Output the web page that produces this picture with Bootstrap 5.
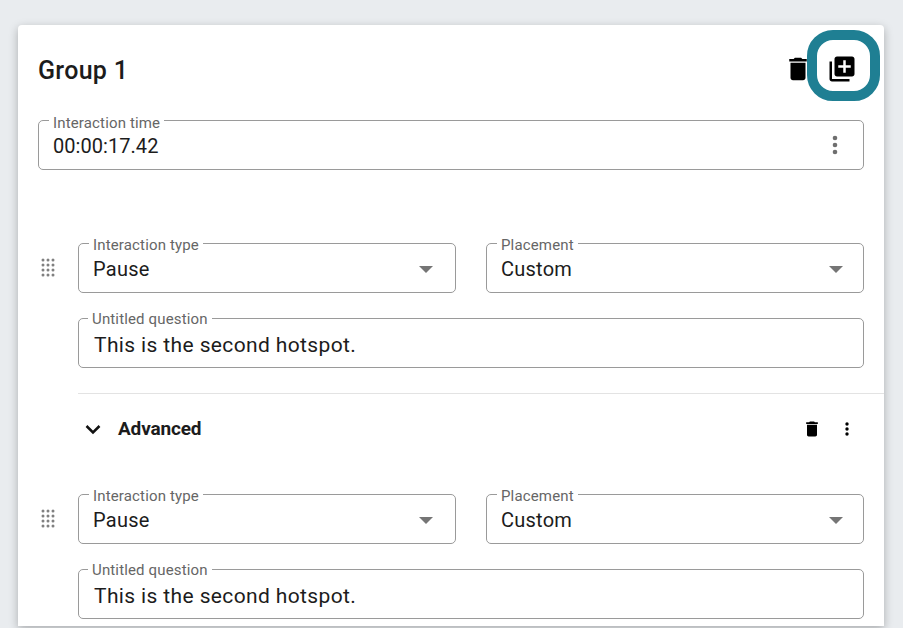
<!DOCTYPE html>
<html>
<head>
    <title>Group 1</title>
    <link href="https://cdn.jsdelivr.net/npm/bootstrap@5.3.3/dist/css/bootstrap.min.css" rel="stylesheet">
    <style>
        html, body {
            height: 628px;
            overflow: hidden;
        }

        body {
            background-color: #e9ecef;
            font-family: Roboto, "Liberation Sans", sans-serif;
            color: #1c1c1c;
        }

        .page-wrap {
            padding: 25px 19px 0 18px;
        }

        .group-panel {
            position: relative;
            height: 601px;
            background-color: #fff;
            border-radius: 4px 4px 0 0;
            box-shadow: 0 3px 10px rgba(0, 0, 0, .27);
        }

        .group-head {
            height: 95px;
            padding: 0 20px 8px 20px;
        }

        .group-title {
            font-size: 25px;
            font-weight: 500;
            letter-spacing: .3px;
            line-height: 1;
            margin: 4px 0 0;
        }

        .icon-slot {
            display: flex;
            align-items: center;
            justify-content: center;
            width: 44px;
            height: 46px;
        }

        .highlight-ring {
            position: absolute;
            left: 789px;
            top: 5px;
            width: 73px;
            height: 71px;
            border: 10px solid #1f7f93;
            border-radius: 26px;
        }

        .outline-field {
            position: relative;
            height: 50px;
            border: 1px solid #9a9a9a;
            border-radius: 5px;
            padding: 0 14px;
            font-size: 20px;
            letter-spacing: .25px;
        }

        .field-label {
            position: absolute;
            top: -7px;
            left: 10px;
            padding: 0 4px;
            background-color: #fff;
            font-size: 15px;
            line-height: 17px;
            letter-spacing: .15px;
            color: #666;
        }

        .time-label {
            top: -6px;
        }

        .question-label {
            top: -8px;
            left: 9px;
        }

        .field-value {
            padding-top: 11px;
            line-height: 29px;
        }

        .time-value {
            letter-spacing: .05px;
        }

        .question-value {
            font-size: 21px;
            letter-spacing: .37px;
            padding-top: 12px;
            padding-left: 1px;
        }

        .time-row {
            margin: 0 20px;
        }

        .time-dots {
            position: absolute;
            right: 21px;
            top: 13px;
        }

        .select-caret {
            position: absolute;
            right: 22px;
            top: 22px;
            width: 0;
            height: 0;
            border-left: 7px solid transparent;
            border-right: 7px solid transparent;
            border-top: 7px solid #757575;
        }

        .placement-caret {
            right: 20px;
        }

        .hotspot-block {
            padding: 0 20px 0 60px;
            position: relative;
        }

        .drag-handle {
            position: absolute;
            left: 23px;
            top: 15px;
        }

        .field-pair {
            display: grid;
            grid-template-columns: 378px 378px;
            column-gap: 30px;
            margin-bottom: 25px;
        }

        .advanced-row {
            height: 70px;
            margin: 25px 0 31px 60px;
            padding: 0 28px 0 5px;
            border-top: 1px solid #e3e3e3;
        }

        .advanced-label {
            font-size: 19px;
            font-weight: 700;
            margin-left: 15px;
            padding-top: 1px;
            letter-spacing: -.15px;
        }

        .advanced-dots {
            margin-left: 16px;
        }

        .first-block {
            margin-top: 73px;
        }
    </style>
</head>

<body>

<div class="page-wrap">
    <div class="group-panel">
        <!-- titulo do grupo -->
        <div class="group-head d-flex align-items-center justify-content-between">
            <h1 class="group-title">Group 1</h1>
            <div class="d-flex align-items-center">
                <div class="icon-slot">
                    <svg width="30" height="30" viewBox="0 0 24 24"><path d="M6 19c0 1.100.9 2 2 2h8c1.100 0 2-.9 2-2V7H6v12zM19 4h-3.500l-1-1h-5l-1 1H5v2h14V4z"/></svg>
                </div>
                <div class="icon-slot">
                    <svg width="30" height="30" viewBox="0 0 24 24"><path d="M4 6H2v14c0 1.100.9 2 2 2h14v-2H4V6zm16-4H8c-1.100 0-2 .9-2 2v12c0 1.100.9 2 2 2h12c1.100 0 2-.9 2-2V4c0-1.100-.9-2-2-2zm-1 9h-4v4h-2v-4H9V9h4V5h2v4h4v2z"/></svg>
                </div>
            </div>
        </div>
        <div class="highlight-ring"></div>

        <div class="time-row">
            <div class="outline-field">
                <span class="field-label time-label">Interaction time</span>
                <div class="field-value time-value">00:00:17.42</div>
                <svg class="time-dots" width="14" height="22" viewBox="0 0 14 22" fill="#6f6f6f"><circle cx="7" cy="4" r="2.300"/><circle cx="7" cy="11" r="2.300"/><circle cx="7" cy="18" r="2.300"/></svg>
            </div>
        </div>

        <!-- primeiro hotspot -->
        <div class="hotspot-block first-block">
            <svg class="drag-handle" width="16" height="19" viewBox="0 0 16 19" fill="#808080"><circle cx="2" cy="2" r="1.500"/><circle cx="7" cy="2" r="1.500"/><circle cx="12" cy="2" r="1.500"/><circle cx="2" cy="7" r="1.500"/><circle cx="7" cy="7" r="1.500"/><circle cx="12" cy="7" r="1.500"/><circle cx="2" cy="12" r="1.500"/><circle cx="7" cy="12" r="1.500"/><circle cx="12" cy="12" r="1.500"/><circle cx="2" cy="17" r="1.500"/><circle cx="7" cy="17" r="1.500"/><circle cx="12" cy="17" r="1.500"/></svg>
            <div class="field-pair">
                <div class="outline-field">
                    <span class="field-label">Interaction type</span>
                    <div class="field-value">Pause</div>
                    <span class="select-caret"></span>
                </div>
                <div class="outline-field">
                    <span class="field-label">Placement</span>
                    <div class="field-value">Custom</div>
                    <span class="select-caret placement-caret"></span>
                </div>
            </div>
            <div class="outline-field">
                <span class="field-label question-label">Untitled question</span>
                <div class="field-value question-value">This is the second hotspot.</div>
            </div>
        </div>

        <div class="advanced-row d-flex align-items-center justify-content-between">
            <div class="d-flex align-items-center">
                <svg width="20" height="20" viewBox="0 0 20 20" fill="none" stroke="#111" stroke-width="2.500"><path d="M3.500 7l6.500 6.500L16.500 7"/></svg>
                <span class="advanced-label">Advanced</span>
            </div>
            <div class="d-flex align-items-center">
                <svg width="20" height="20" viewBox="0 0 24 24"><path d="M6 19c0 1.100.9 2 2 2h8c1.100 0 2-.9 2-2V7H6v12zM19 4h-3.500l-1-1h-5l-1 1H5v2h14V4z"/></svg>
                <svg class="advanced-dots" width="18" height="18" viewBox="0 0 18 18"><circle cx="9" cy="4" r="1.700"/><circle cx="9" cy="9" r="1.700"/><circle cx="9" cy="14" r="1.700"/></svg>
            </div>
        </div>

        <!-- segundo hotspot -->
        <div class="hotspot-block">
            <svg class="drag-handle" width="16" height="19" viewBox="0 0 16 19" fill="#808080"><circle cx="2" cy="2" r="1.500"/><circle cx="7" cy="2" r="1.500"/><circle cx="12" cy="2" r="1.500"/><circle cx="2" cy="7" r="1.500"/><circle cx="7" cy="7" r="1.500"/><circle cx="12" cy="7" r="1.500"/><circle cx="2" cy="12" r="1.500"/><circle cx="7" cy="12" r="1.500"/><circle cx="12" cy="12" r="1.500"/><circle cx="2" cy="17" r="1.500"/><circle cx="7" cy="17" r="1.500"/><circle cx="12" cy="17" r="1.500"/></svg>
            <div class="field-pair">
                <div class="outline-field">
                    <span class="field-label">Interaction type</span>
                    <div class="field-value">Pause</div>
                    <span class="select-caret"></span>
                </div>
                <div class="outline-field">
                    <span class="field-label">Placement</span>
                    <div class="field-value">Custom</div>
                    <span class="select-caret placement-caret"></span>
                </div>
            </div>
            <div class="outline-field">
                <span class="field-label question-label">Untitled question</span>
                <div class="field-value question-value">This is the second hotspot.</div>
            </div>
        </div>
    </div>
</div>

<script src="https://cdn.jsdelivr.net/npm/bootstrap@5.3.3/dist/js/bootstrap.bundle.min.js"></script>
</body>

</html>
